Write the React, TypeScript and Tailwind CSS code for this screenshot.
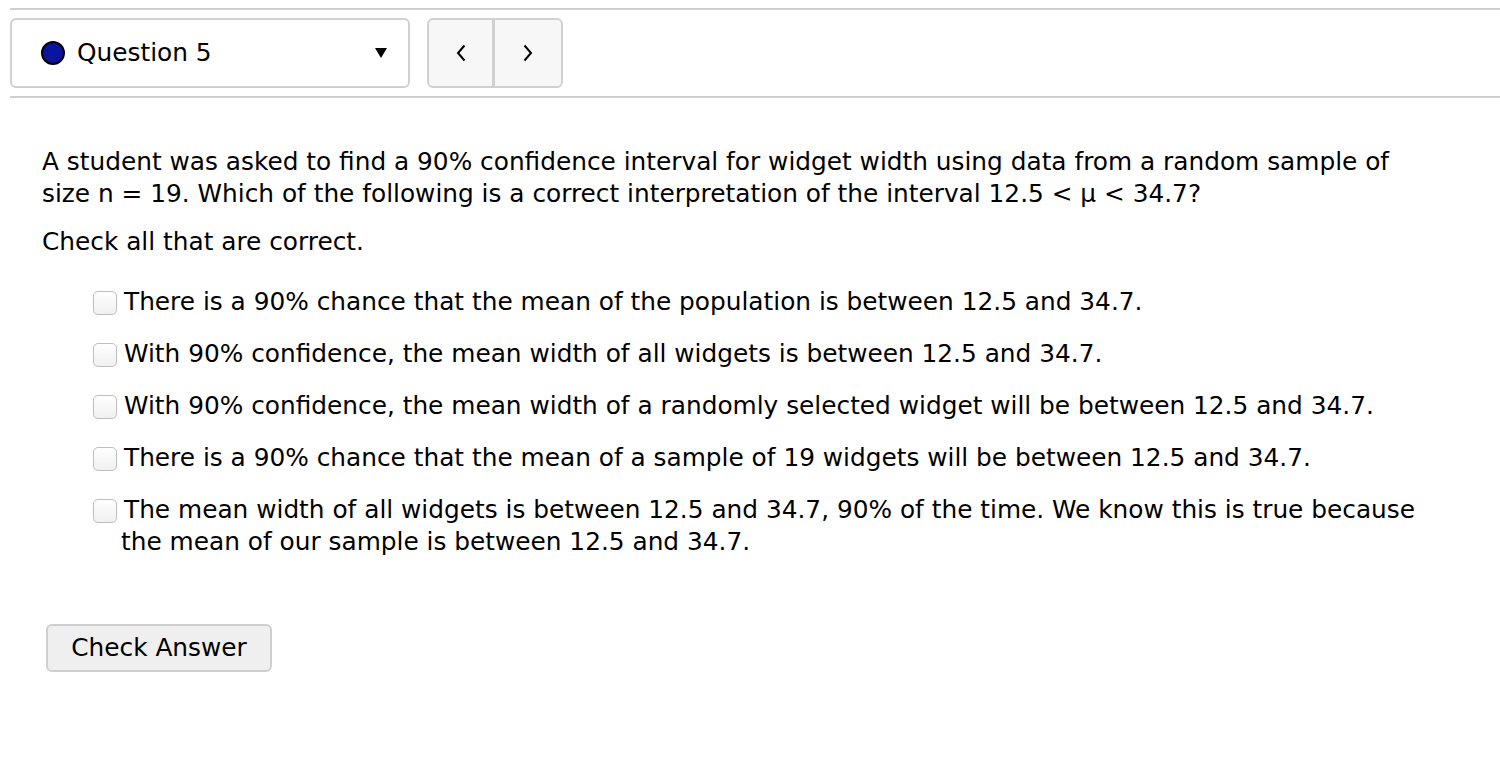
import React from "react";

const options: React.ReactNode[] = [
  "There is a 90% chance that the mean of the population is between 12.5 and 34.7.",
  "With 90% confidence, the mean width of all widgets is between 12.5 and 34.7.",
  "With 90% confidence, the mean width of a randomly selected widget will be between 12.5 and 34.7.",
  "There is a 90% chance that the mean of a sample of 19 widgets will be between 12.5 and 34.7.",
  <>
    The mean width of all widgets is between 12.5 and 34.7, 90% of the time. We know this is true because
    <br />
    <span className="-ml-[3px]">the mean of our sample is between 12.5 and 34.7.</span>
  </>,
];

export default function App() {
  return (
    <div className="w-[1500px] h-[780px] bg-white text-black font-['DejaVu_Sans',sans-serif] overflow-hidden">
      <div className="pl-[10px] pt-[8px]">
        <div className="border-t-2 border-[#d0d0d0]" />
        <div className="flex items-center pt-[8px] pb-[8px] gap-[17px]">
          <div className="w-[400px] h-[70px] border-2 border-[#d0d0d0] rounded-[6px] flex items-center pl-[29px] pr-[20px]">
            <span className="w-[24px] h-[24px] rounded-full bg-[#0a14a0] border-2 border-black" />
            <span className="ml-[12px] text-[24.8px] leading-none">Question 5</span>
            <span className="ml-auto">
              <svg width="14" height="12" viewBox="0 0 14 12"><path d="M1 1 L13 1 L7 11 Z" fill="#000" /></svg>
            </span>
          </div>
          <div className="h-[70px] w-[136px] border-2 border-[#d0d0d0] rounded-[6px] bg-[#f7f7f7] flex">
            <div className="w-[66px] flex items-center justify-center border-r-[3px] border-[#d0d0d0]">
              <svg width="12" height="20" viewBox="0 0 12 20"><path d="M9.5 2.5 L3 10 L9.5 17.5" fill="none" stroke="#000" strokeWidth="2" /></svg>
            </div>
            <div className="flex-1 flex items-center justify-center">
              <svg width="12" height="20" viewBox="0 0 12 20"><path d="M2.5 2.5 L9 10 L2.5 17.5" fill="none" stroke="#000" strokeWidth="2" /></svg>
            </div>
          </div>
        </div>
        <div className="border-t-2 border-[#d0d0d0]" />
      </div>

      <div className="pl-[42px] pt-[48px] text-[24.8px] leading-[32px]">
        <p className="whitespace-nowrap">
          A student was asked to find a 90% confidence interval for widget width using data from a random sample of
          <br />
          size n = 19. Which of the following is a correct interpretation of the interval 12.5 &lt; μ &lt; 34.7?
        </p>
        <p className="mt-[16px]">Check all that are correct.</p>

        <ul className="mt-[28px] pl-[51px] flex flex-col gap-[20px]">
          {options.map((o, i) => (
            <li key={i} className="flex items-start">
              <span className="mt-[5px] w-[24px] h-[24px] shrink-0 rounded-[5px] border border-[#bdbdbd] bg-gradient-to-b from-white to-[#f0f0f0]" />
              <span className="ml-[7px] whitespace-nowrap">{o}</span>
            </li>
          ))}
        </ul>

        <button className="mt-[66px] ml-[4px] h-[48px] w-[226px] border-2 border-[#cfcfcf] rounded-[6px] bg-[#efefef] text-[24.8px]">
          Check Answer
        </button>
      </div>
    </div>
  );
}
